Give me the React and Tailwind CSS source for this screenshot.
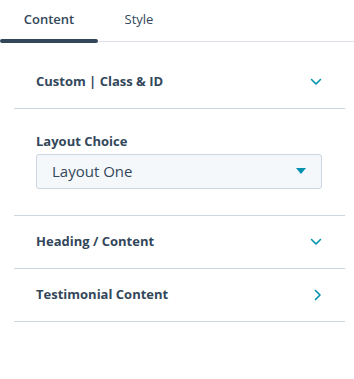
import React, { useState } from 'react';

const font = { fontFamily: '"Open Sans", "Liberation Sans", sans-serif' };

function ChevronDown() {
  return (
    <svg width="12" height="8" viewBox="0 0 12 8" fill="none" stroke="#0091ae" strokeWidth="1.6" strokeLinecap="round" strokeLinejoin="round">
      <path d="M1.5 1.5 6 6l4.5-4.5" />
    </svg>
  );
}

function ChevronRight() {
  return (
    <svg width="8" height="12" viewBox="0 0 8 12" fill="none" stroke="#0091ae" strokeWidth="1.6" strokeLinecap="round" strokeLinejoin="round">
      <path d="M1.5 1.5 6 6l-4.5 4.5" />
    </svg>
  );
}

function Row({ title, open }) {
  return (
    <div className="h-[53px] flex items-center justify-between pl-[22px] pr-[23px] border-b border-[#cbd6e2]">
      <span className="text-[13px] font-bold text-[#33475b]">{title}</span>
      {open ? <ChevronDown /> : <ChevronRight />}
    </div>
  );
}

export default function App() {
  const [tab, setTab] = useState('content');

  return (
    <div className="w-[354px] h-[379px] bg-white" style={font}>
      {/* Tabs */}
      <div className="flex h-[43px] relative">
        <button
          onClick={() => setTab('content')}
          className="w-[98px] h-full flex items-start justify-center pt-[10px] text-[13px] font-semibold text-[#33475b] relative"
        >
          Content
          {tab === 'content' && (
            <span className="absolute left-0 right-0 bottom-0 h-[4px] rounded-full bg-[#33475b]" />
          )}
        </button>
        <button
          onClick={() => setTab('style')}
          className="w-[82px] h-full flex items-start justify-center pt-[10px] text-[13px] text-[#33475b]"
        >
          Style
        </button>
        <div className="flex-1" />
        <div className="absolute left-[98px] right-0 bottom-[1px] h-px bg-[#dfe3eb]" />
      </div>

      <div className="ml-[14px] mr-[9px] pt-[13px]">
        <Row title="Custom | Class & ID" open />

        <div className="pl-[22px] pr-[23px] pt-[23px] pb-[26px] border-b border-[#cbd6e2]">
          <div className="text-[13px] font-bold text-[#33475b] mb-[2px]">Layout Choice</div>
          <div className="h-[35px] flex items-center justify-between pl-[15px] pr-[15px] bg-[#f5f8fa] border border-[#cbd6e2] rounded-[3px]">
            <span className="text-[15px] text-[#33475b]">Layout One</span>
            <svg width="10" height="6" viewBox="0 0 10 6">
              <path d="M0 0h10L5 6z" fill="#0091ae" />
            </svg>
          </div>
        </div>

        <Row title="Heading / Content" open />
        <Row title="Testimonial Content" />
      </div>
    </div>
  );
}
